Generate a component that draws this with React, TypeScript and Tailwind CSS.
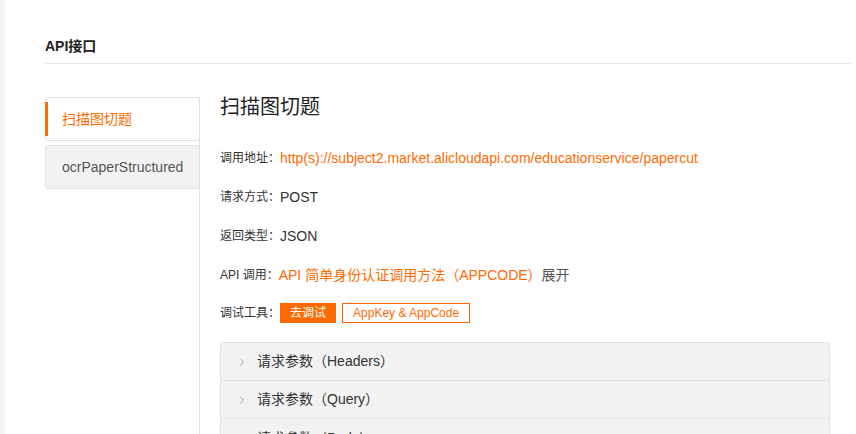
import { ChevronRight } from "lucide-react";

const orange = "text-[#ff6a00]";

function InfoRow({ label, children, className = "" }: { label: string; children: React.ReactNode; className?: string }) {
  return (
    <div className={`flex items-center h-[20px] ${className}`}>
      <span className="text-[12px] text-[#333]">{label}</span>
      <span className="text-[14px] text-[#333]">{children}</span>
    </div>
  );
}

function PanelRow({ title, last }: { title: string; last?: boolean }) {
  return (
    <div className={`flex items-center h-[38px] pl-[15px] ${last ? "" : "border-b border-[#e3e3e3]"}`}>
      <ChevronRight size={12} strokeWidth={1.5} className="text-[#888]" />
      <span className="ml-[9px] text-[14px] text-[#333]">{title}</span>
    </div>
  );
}

export default function App() {
  return (
    <div
      className="min-h-screen bg-[#f5f5f5] pl-[5px]"
      style={{ fontFamily: '"Liberation Sans", Arial, "Noto Sans CJK SC", sans-serif' }}
    >
      <div className="bg-white h-[434px] overflow-hidden pl-10 pr-[5px]">
        <div className="pt-[38px] pb-[8px] border-b border-[#e8e8e8] text-[14px] leading-[17px] font-bold text-[#222]">
          API接口
        </div>

        <div className="flex mt-[33px]">
          <div className="w-[155px] shrink-0 border-r border-[#e0e0e0] h-[400px]">
            <div className="flex items-center h-[44px] border border-[#e0e0e0] rounded-[3px] bg-white -mr-px">
              <span className="w-[3px] h-[34px] bg-[#ff6a00] -ml-px" />
              <span className={`ml-[14px] text-[14px] ${orange}`}>扫描图切题</span>
            </div>
            <div className="flex items-center mt-1 h-[44px] border border-[#e0e0e0] rounded-[3px] bg-[#f2f2f2] pl-4 -mr-px">
              <span className="text-[14px] text-[#555]">ocrPaperStructured</span>
            </div>
          </div>

          <div className="flex-1 ml-5 pr-[21px]">
            <div className="text-[20px] leading-[20px] text-[#222]">扫描图切题</div>

            <InfoRow label="调用地址：" className="mt-[31px]">
              <span className={orange}>http(s)://subject2.market.alicloudapi.com/educationservice/papercut</span>
            </InfoRow>
            <InfoRow label="请求方式：" className="mt-[19px]">POST</InfoRow>
            <InfoRow label="返回类型：" className="mt-[19px]">JSON</InfoRow>
            <InfoRow label="API 调用：" className="mt-[19px]">
              <span className={orange}>API 简单身份认证调用方法（APPCODE）</span>
              <span className="text-[#555]">展开</span>
            </InfoRow>
            <div className="flex items-center h-[20px] mt-[18px]">
              <span className="text-[12px] text-[#333]">调试工具：</span>
              <button className="h-[20px] px-[10px] bg-[#ff6a00] text-white text-[12px] leading-[20px]">去调试</button>
              <button className="ml-1.5 h-[20px] px-[10px] border border-[#ff6a00] text-[#ff6a00] text-[12px] leading-[18px]">
                AppKey &amp; AppCode
              </button>
            </div>

            <div className="mt-[19px] border border-[#e3e3e3] rounded-[3px] bg-[#f2f2f2]">
              <PanelRow title="请求参数（Headers）" />
              <PanelRow title="请求参数（Query）" />
              <PanelRow title="请求参数（Body）" last />
            </div>
          </div>
        </div>
      </div>
    </div>
  );
}
